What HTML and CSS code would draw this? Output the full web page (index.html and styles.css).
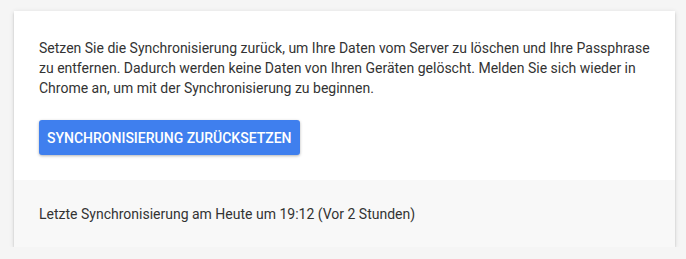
FILE: index.html
```html
<!DOCTYPE html>
<html lang="de">
<head>
  <meta charset="UTF-8">
  <title>Synchronisierung zurücksetzen</title>
  <link rel="stylesheet" href="styles.css">
</head>
<body>
  <div class="card">
    <div class="card-body">
      <p class="info">Setzen Sie die Synchronisierung zurück, um Ihre Daten vom Server zu löschen und Ihre Passphrase zu entfernen. Dadurch werden keine Daten von Ihren Geräten gelöscht. Melden Sie sich wieder in Chrome an, um mit der Synchronisierung zu beginnen.</p>
      <button class="reset-btn">Synchronisierung zurücksetzen</button>
    </div>
    <div class="card-footer">
      Letzte Synchronisierung am Heute um 19:12 (Vor 2 Stunden)
    </div>
  </div>
</body>
</html>
```

FILE: styles.css
```css
body {
  margin: 0;
  padding: 11px 11px 0 14px;
  background: #f5f5f5;
  font-family: Roboto, 'Liberation Sans', sans-serif;
  font-size: 14px;
  color: #333;
}

.card {
  background: #fff;
  box-shadow: 0 2px 2px rgba(0,0,0,0.14), 0 1px 5px rgba(0,0,0,0.12), 0 3px 1px -2px rgba(0,0,0,0.2);
}

.card-body {
  padding: 27px 25px 25px;
}

.info {
  margin: 0 0 22px;
  line-height: 20px;
  max-width: 620px;
}

.reset-btn {
  display: block;
  height: 35px;
  padding: 0 8px;
  background-color: #3f7fee;
  color: #fff;
  font-family: inherit;
  font-size: 14px;
  font-weight: 500;
  text-transform: uppercase;
  border: none;
  border-radius: 3px;
  box-shadow: 0 1px 3px rgba(0,0,0,0.3);
}

.card-footer {
  background: #f8f8f8;
  height: 67px;
  display: flex;
  align-items: center;
  padding: 0 25px;
}
```
